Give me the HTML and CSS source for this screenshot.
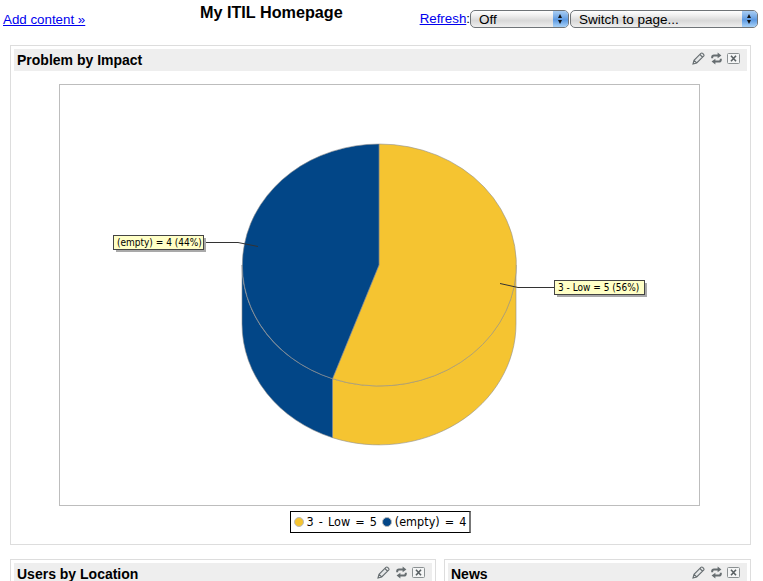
FILE: index.html
```html
<!DOCTYPE html>
<html lang="en">
<head>
<meta charset="utf-8">
<title>My ITIL Homepage</title>
<link rel="stylesheet" href="styles.css">
</head>
<body>
<svg class="defs" width="0" height="0" aria-hidden="true">
  <symbol id="i-edit" viewBox="0 0 13 13">
    <path d="M1 12 L2 8.3 L8.9 1.4 Q9.8 .6 10.7 1.4 L11.6 2.3 Q12.4 3.2 11.6 4.1 L4.7 11 Z M8 2.6 L10.4 5 M2 8.3 L4.7 11" fill="#e4e6e7" stroke="#666d70" stroke-width="1.1"/>
  </symbol>
  <symbol id="i-refresh" viewBox="0 0 11 13">
    <path d="M1.2 6.2 V5.2 Q1.2 3.4 3 3.4 H7" fill="none" stroke="#666d70" stroke-width="2"/>
    <path d="M6.6 0.4 L10.4 3.4 L6.6 6.3 Z" fill="#666d70"/>
    <path d="M9.8 6.8 V7.8 Q9.8 9.6 8 9.6 H4" fill="none" stroke="#666d70" stroke-width="2"/>
    <path d="M4.4 6.7 L.6 9.6 L4.4 12.6 Z" fill="#666d70"/>
  </symbol>
  <symbol id="i-close" viewBox="0 0 13 11">
    <rect x="0.5" y="0.5" width="12" height="10" rx="1" fill="#f4f5f5" stroke="#8b9092"/>
    <path d="M4 2.8 L9 8.2 M9 2.8 L4 8.2" fill="none" stroke="#596063" stroke-width="1.6"/>
  </symbol>
</svg>

<header class="topbar">
  <div class="topbar-left"><a href="#">Add content »</a></div>
  <h1 class="page-title">My ITIL Homepage</h1>
  <div class="topbar-right">
    <span class="refresh"><a href="#">Refresh</a>:</span>
    <div class="select select-refresh"><span>Off</span><i class="select-btn"><b class="up"></b><b class="down"></b></i></div>
    <div class="select select-page"><span>Switch to page...</span><i class="select-btn"><b class="up"></b><b class="down"></b></i></div>
  </div>
</header>

<main class="dashboard">
  <section class="panel">
    <div class="panel-head">
      <h2>Problem by Impact</h2>
      <div class="tools">
        <svg class="t-edit"><use href="#i-edit"/></svg>
        <svg class="t-refresh"><use href="#i-refresh"/></svg>
        <svg class="t-close"><use href="#i-close"/></svg>
      </div>
    </div>
    <div class="chart-wrap">
      <svg class="chart" width="641" height="422" viewBox="59 84 641 422">
        <rect x="59.5" y="84.5" width="640" height="421" fill="#fff" stroke="#bdbdbd"/>
        <path d="M516 265 V324 A137 121 0 0 1 332.5 437.7 V378.7 A137 121 0 0 0 516 265 Z" fill="#f5c431" stroke="#8f8f8f" stroke-width=".6"/>
        <path d="M242 265 V324 A137 121 0 0 0 332.5 437.7 V378.7 A137 121 0 0 1 242 265 Z" fill="#024687" stroke="#8f8f8f" stroke-width=".6"/>
        <path d="M379 265 V144 A137 121 0 1 1 332.5 378.7 Z" fill="#f5c431" stroke="#8f8f8f" stroke-width=".6"/>
        <path d="M379 265 L332.5 378.7 A137 121 0 0 1 379 144 Z" fill="#024687" stroke="#8f8f8f" stroke-width=".6"/>
        <path d="M205 242.5 H238 L258 246.5" fill="none" stroke="#333"/>
        <path d="M554 287.5 H518 L500 283.5" fill="none" stroke="#333"/>
        <g class="callout">
          <rect x="116" y="238" width="90" height="14" fill="#a9a9a9"/>
          <rect x="113.5" y="235.5" width="90" height="14" fill="#ffffc6" stroke="#444"/>
          <text x="117" y="246">(empty) = 4 (44%)</text>
        </g>
        <g class="callout">
          <rect x="557" y="283" width="90" height="14" fill="#a9a9a9"/>
          <rect x="554.5" y="280.5" width="90" height="14" fill="#ffffc6" stroke="#444"/>
          <text x="558" y="291">3 - Low = 5 (56%)</text>
        </g>
      </svg>
    </div>
    <div class="legend">
      <span class="dot dot-yellow"></span><span class="legend-label">3 - Low = 5</span>
      <span class="dot dot-blue"></span><span class="legend-label">(empty) = 4</span>
    </div>
  </section>

  <div class="row">
    <section class="panel panel-users">
      <div class="panel-head">
        <h2>Users by Location</h2>
        <div class="tools">
          <svg class="t-edit"><use href="#i-edit"/></svg>
          <svg class="t-refresh"><use href="#i-refresh"/></svg>
          <svg class="t-close"><use href="#i-close"/></svg>
        </div>
      </div>
    </section>
    <section class="panel panel-news">
      <div class="panel-head">
        <h2>News</h2>
        <div class="tools">
          <svg class="t-edit"><use href="#i-edit"/></svg>
          <svg class="t-refresh"><use href="#i-refresh"/></svg>
          <svg class="t-close"><use href="#i-close"/></svg>
        </div>
      </div>
    </section>
  </div>
</main>
</body>
</html>
```

FILE: styles.css
```css
html, body {
  margin: 0;
  padding: 0;
  height: 581px;
  overflow: hidden;
  background: #fff;
  font-family: "Liberation Sans", Arial, sans-serif;
  color: #000;
}
.defs { position: absolute; }
a { color: #00e; }

.topbar {
  display: flex;
  align-items: flex-start;
  height: 45px;
  padding: 0 5px 0 3px;
}
.topbar-left {
  width: 197px;
  padding-top: 11px;
  font-size: 13.33px;
  line-height: 17px;
}
.page-title {
  margin: 3px 0 0;
  font-size: 16.2px;
  line-height: 18px;
  font-weight: bold;
}
.topbar-right {
  margin-left: auto;
  display: flex;
  align-items: flex-start;
  padding-top: 10px;
  font-size: 13.33px;
}
.refresh {
  line-height: 17px;
  margin-right: 0;
}
.select {
  box-sizing: border-box;
  height: 18px;
  display: flex;
  align-items: center;
  justify-content: space-between;
  border: 1px solid #6f7478;
  border-radius: 5px;
  background: linear-gradient(#fff 0, #f1f1f1 25%, #d8d8d8 60%, #eee 100%);
  font-size: 13.5px;
  overflow: hidden;
}
.select span { padding-left: 8px; }
.select-refresh { width: 99px; margin-right: 1px; }
.select-page { width: 188px; }
.select-btn {
  width: 15px;
  height: 100%;
  position: relative;
  background: linear-gradient(#a8cdf3 0, #74a9e6 40%, #5b99e2 55%, #a9d2f7 100%);
}
.select-btn b {
  position: absolute;
  left: 5px;
  width: 0;
  height: 0;
  border-left: 2.5px solid transparent;
  border-right: 2.5px solid transparent;
}
.select-btn .up { top: 3px; border-bottom: 4px solid #111; }
.select-btn .down { bottom: 3px; border-top: 4px solid #111; }

.dashboard {
  padding: 0 12px 0 10px;
  display: flex;
  flex-direction: column;
  gap: 14px;
}
.panel {
  border: 1px solid #ddd;
  padding: 3px;
}
.panel-head {
  height: 22px;
  display: flex;
  align-items: center;
  justify-content: space-between;
  background: #eee;
  padding: 0 7px 0 3px;
}
.panel-head h2 {
  margin: 0;
  font-size: 14px;
  line-height: 22px;
  font-weight: bold;
}
.tools {
  display: flex;
  align-items: center;
  gap: 5px;
  margin-top: -4px;
}
.tools svg { display: block; }
.t-edit { width: 13px; height: 13px; margin-right: 1px; }
.t-refresh { width: 11px; height: 13px; }
.t-close { width: 13px; height: 11px; }

.chart-wrap {
  display: flex;
  justify-content: center;
  margin-top: 13px;
  padding-right: 3px;
}
.chart { display: block; }
.callout text {
  font-family: "DejaVu Sans", sans-serif;
  font-stretch: condensed;
  font-size: 10px;
  fill: #000;
}

.legend {
  width: max-content;
  box-sizing: border-box;
  height: 22px;
  margin: 5px auto 8px;
  padding: 0 3px 2px;
  display: flex;
  align-items: center;
  border: 1px solid #000;
  border-right: 2px solid #777;
  font-family: "DejaVu Sans", sans-serif;
  font-stretch: condensed;
  font-size: 12.5px;
  word-spacing: 1.5px;
}
.dot {
  width: 8px;
  height: 8px;
  border-radius: 50%;
  border: 1px solid #bbb;
  box-sizing: content-box;
  margin-right: 3px;
  position: relative;
  top: 1px;
}
.dot-yellow { background: #f5c431; }
.dot-blue { background: #024687; }
.legend-label { margin-right: 5px; }
.legend-label:last-child { margin-right: 0; }

.row {
  display: flex;
  gap: 8px;
}
.panel-users { width: 418px; height: 60px; }
.panel-news { width: 299px; height: 60px; }
```
